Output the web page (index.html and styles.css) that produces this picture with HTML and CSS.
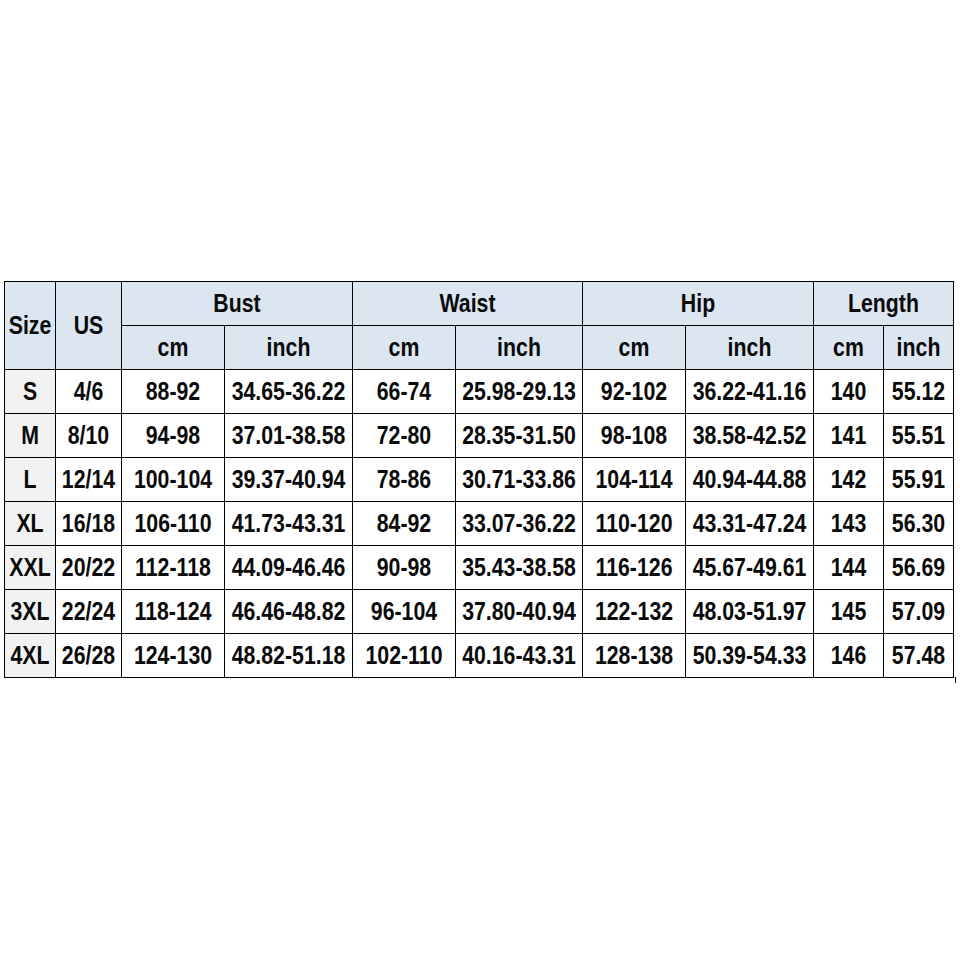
FILE: index.html
```html
<!DOCTYPE html>
<html>
<head>
<meta charset="utf-8">
<link rel="stylesheet" href="styles.css">
</head>
<body>
<div class="chart">
  <div class="c h span2"><span>Size</span></div>
  <div class="c h span2"><span>US</span></div>
  <div class="c h wide"><span>Bust</span></div>
  <div class="c h wide"><span>Waist</span></div>
  <div class="c h wide"><span>Hip</span></div>
  <div class="c h wide"><span>Length</span></div>
  <div class="c h"><span>cm</span></div><div class="c h"><span>inch</span></div>
  <div class="c h"><span>cm</span></div><div class="c h"><span>inch</span></div>
  <div class="c h"><span>cm</span></div><div class="c h"><span>inch</span></div>
  <div class="c h"><span>cm</span></div><div class="c h"><span>inch</span></div>

  <div class="c s"><span>S</span></div><div class="c"><span>4/6</span></div><div class="c"><span>88-92</span></div><div class="c"><span>34.65-36.22</span></div><div class="c"><span>66-74</span></div><div class="c"><span>25.98-29.13</span></div><div class="c"><span>92-102</span></div><div class="c"><span>36.22-41.16</span></div><div class="c"><span>140</span></div><div class="c"><span>55.12</span></div>
  <div class="c s"><span>M</span></div><div class="c"><span>8/10</span></div><div class="c"><span>94-98</span></div><div class="c"><span>37.01-38.58</span></div><div class="c"><span>72-80</span></div><div class="c"><span>28.35-31.50</span></div><div class="c"><span>98-108</span></div><div class="c"><span>38.58-42.52</span></div><div class="c"><span>141</span></div><div class="c"><span>55.51</span></div>
  <div class="c s"><span>L</span></div><div class="c"><span>12/14</span></div><div class="c"><span>100-104</span></div><div class="c"><span>39.37-40.94</span></div><div class="c"><span>78-86</span></div><div class="c"><span>30.71-33.86</span></div><div class="c"><span>104-114</span></div><div class="c"><span>40.94-44.88</span></div><div class="c"><span>142</span></div><div class="c"><span>55.91</span></div>
  <div class="c s"><span>XL</span></div><div class="c"><span>16/18</span></div><div class="c"><span>106-110</span></div><div class="c"><span>41.73-43.31</span></div><div class="c"><span>84-92</span></div><div class="c"><span>33.07-36.22</span></div><div class="c"><span>110-120</span></div><div class="c"><span>43.31-47.24</span></div><div class="c"><span>143</span></div><div class="c"><span>56.30</span></div>
  <div class="c s"><span>XXL</span></div><div class="c"><span>20/22</span></div><div class="c"><span>112-118</span></div><div class="c"><span>44.09-46.46</span></div><div class="c"><span>90-98</span></div><div class="c"><span>35.43-38.58</span></div><div class="c"><span>116-126</span></div><div class="c"><span>45.67-49.61</span></div><div class="c"><span>144</span></div><div class="c"><span>56.69</span></div>
  <div class="c s"><span>3XL</span></div><div class="c"><span>22/24</span></div><div class="c"><span>118-124</span></div><div class="c"><span>46.46-48.82</span></div><div class="c"><span>96-104</span></div><div class="c"><span>37.80-40.94</span></div><div class="c"><span>122-132</span></div><div class="c"><span>48.03-51.97</span></div><div class="c"><span>145</span></div><div class="c"><span>57.09</span></div>
  <div class="c s"><span>4XL</span></div><div class="c"><span>26/28</span></div><div class="c"><span>124-130</span></div><div class="c"><span>48.82-51.18</span></div><div class="c"><span>102-110</span></div><div class="c"><span>40.16-43.31</span></div><div class="c"><span>128-138</span></div><div class="c"><span>50.39-54.33</span></div><div class="c"><span>146</span></div><div class="c"><span>57.48</span></div>
</div>
</body>
</html>
```
FILE: styles.css
```css
html, body {
  margin: 0;
  padding: 0;
  background: #ffffff;
}
body {
  width: 960px;
  height: 960px;
  padding-top: 281px;
  box-sizing: border-box;
}
.chart {
  position: relative;
  margin-left: 4px;
  width: 950px;
  box-sizing: border-box;
  display: grid;
  grid-template-columns: 50px 65px 102px 127px 102px 126px 102px 127px 69px 69px;
  grid-auto-rows: 43px;
  gap: 1px;
  background: #000;
  border: 1px solid #000;
  font-family: "Liberation Sans", Arial, sans-serif;
  font-weight: bold;
  font-size: 21.3px;
  color: #0a0a0a;
}
.chart::after {
  content: "";
  position: absolute;
  right: -3px;
  bottom: -6px;
  width: 1px;
  height: 6px;
  background: #000;
}
.c {
  background: #ffffff;
  display: flex;
  align-items: center;
  justify-content: center;
  white-space: nowrap;
}
.c span {
  display: inline-block;
  line-height: 1;
  transform: translateY(1px) scaleY(1.22);
}
.h {
  background: #dce6f1;
}
.span2 {
  grid-row: span 2;
}
.wide {
  grid-column: span 2;
}
.s {
  background: #f2f2f2;
}
```
